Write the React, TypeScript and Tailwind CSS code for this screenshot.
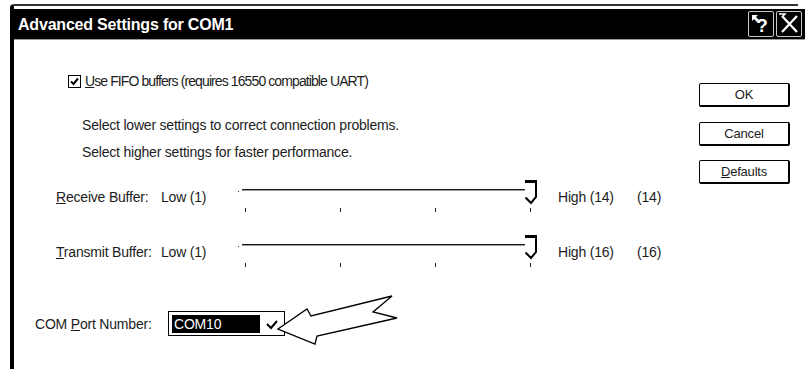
import React from "react";

function Slider() {
  return (
    <svg width="304" height="33" viewBox="0 0 304 33" className="shrink-0">
      <rect x="2" y="11" width="1" height="1" fill="#333" />
      <rect x="6" y="9" width="283" height="1" fill="#1a1a1a" />
      <rect x="6" y="10" width="283" height="1" fill="#9a9a9a" />
      <rect x="289" y="0" width="12" height="3" fill="#000" />
      <path d="M300 2 V17 L295 23 L289.5 17.5" fill="none" stroke="#000" strokeWidth="2" />
      {[9, 104, 199, 294].map((x) => (
        <rect key={x} x={x} y="28" width="1" height="4" fill="#222" />
      ))}
    </svg>
  );
}

function SliderRow({
  label,
  ul,
  high,
  val,
  className,
}: {
  label: string;
  ul: string;
  high: string;
  val: string;
  className: string;
}) {
  return (
    <div className={"flex items-start h-[33px] pl-[42px] " + className}>
      <span className="w-[105px] mt-[9px] shrink-0">
        <u>{ul}</u>
        {label}
      </span>
      <span className="w-[75px] mt-[9px] shrink-0">Low (1)</span>
      <Slider />
      <span className="ml-[18px] w-[79px] mt-[9px] shrink-0">{high}</span>
      <span className="mt-[9px]">{val}</span>
    </div>
  );
}

function DlgButton({ children, className }: { children: React.ReactNode; className: string }) {
  return (
    <div
      className={
        "h-[24px] w-[91px] flex items-center justify-center border border-black border-r-2 border-b-2 rounded-[2px] bg-white " +
        className
      }
    >
      {children}
    </div>
  );
}

export default function App() {
  return (
    <div className="w-[805px] h-[369px] bg-white relative overflow-hidden font-['Liberation_Sans',Arial,sans-serif] text-[#1c1c1c] text-[14px] tracking-[-0.2px] leading-[16px]">
      <div className="pt-[4px] pl-[10px]">
        <div className="w-[788px] h-[365px] border-l-4 border-t-2 border-l-black border-t-[#333] rounded-tl-[4px] pt-[3px]">
          {/* Title bar */}
          <div className="h-[31px] mr-[-7px] bg-black border-b border-[#999] flex items-center pl-[4px] pr-[3px]">
            <span className="text-white font-bold text-[16px] tracking-[-0.2px] pt-[2px] leading-[20px]">
              Advanced Settings for COM1
            </span>
            <div className="ml-auto flex gap-[2px]">
              <div className="w-[26px] h-[26px] border border-[#c8c8c8] rounded-[2px] relative">
                <svg width="24" height="24" viewBox="0 0 24 24" className="absolute left-0 top-0">
                  <path d="M3 3 L9 3 L7 5 L10 8 L8 10 L5 7 L3 9 Z" fill="#fff" />
                  <text
                    x="13"
                    y="20"
                    textAnchor="middle"
                    fill="#fff"
                    fontSize="19"
                    fontWeight="bold"
                    fontFamily="Liberation Sans, Arial, sans-serif"
                  >
                    ?
                  </text>
                </svg>
              </div>
              <div className="w-[26px] h-[26px] border border-[#c8c8c8] rounded-[2px] relative">
                <svg width="24" height="24" viewBox="0 0 24 24" className="absolute left-0 top-0">
                  <path d="M2 2 L8 2 L6 4" fill="none" stroke="#fff" strokeWidth="1.5" />
                  <path d="M5 4 L20 20 M20 4 L5 20" stroke="#fff" strokeWidth="2.2" />
                </svg>
              </div>
            </div>
          </div>

          {/* Body */}
          <div className="flex">
            <div className="flex-1">
              <div className="flex items-center h-[16px] ml-[54px] mt-[33px]">
                <div className="w-[13px] h-[13px] border border-black flex items-center justify-center shrink-0">
                  <svg width="11" height="11" viewBox="0 0 11 11">
                    <path d="M2 5.5 L4.5 8 L9 2.5" fill="none" stroke="#000" strokeWidth="2" />
                  </svg>
                </div>
                <span className="ml-[4px] tracking-[-0.9px]">
                  <u>U</u>se FIFO buffers (requires 16550 compatible UART)
                </span>
              </div>
              <div className="ml-[68px] mt-[28px] h-[16px]">
                Select lower settings to correct connection problems.
              </div>
              <div className="ml-[68px] mt-[11px] h-[16px]">
                Select higher settings for faster performance.
              </div>
              <SliderRow
                className="mt-[20px]"
                ul="R"
                label="eceive Buffer:"
                high="High (14)"
                val="(14)"
              />
              <SliderRow
                className="mt-[22px]"
                ul="T"
                label="ransmit Buffer:"
                high="High (16)"
                val="(16)"
              />
              <div className="flex items-center mt-[43px] ml-[21px] h-[25px]">
                <span className="w-[133px] shrink-0">
                  COM <u>P</u>ort Number:
                </span>
                <div className="w-[117px] h-[25px] border border-black flex items-center pl-[3px]">
                  <div className="w-[88px] h-[18px] bg-black text-white pl-[2px] flex items-center">
                    COM10
                  </div>
                  <svg width="16" height="12" viewBox="0 0 16 12" className="ml-[6px]">
                    <path d="M1 6 L5 10 L11 3" fill="none" stroke="#000" strokeWidth="2" />
                  </svg>
                </div>
              </div>
            </div>
            <div className="w-[91px] mr-[8px] pt-[43px] flex flex-col shrink-0 text-[13px]">
              <DlgButton className="">OK</DlgButton>
              <DlgButton className="mt-[15px]">Cancel</DlgButton>
              <DlgButton className="mt-[14px]">
                <span>
                  <u>D</u>efaults
                </span>
              </DlgButton>
            </div>
          </div>
        </div>
      </div>

      {/* Callout arrow overlay */}
      <svg
        width="805"
        height="369"
        viewBox="0 0 805 369"
        className="absolute left-0 top-0 pointer-events-none"
      >
        <polygon
          points="278,329 307,309 311,316 392,296 373,312 397,318 317,336 315,344"
          fill="#fff"
          stroke="#000"
          strokeWidth="1.3"
          strokeLinejoin="miter"
        />
      </svg>
    </div>
  );
}
